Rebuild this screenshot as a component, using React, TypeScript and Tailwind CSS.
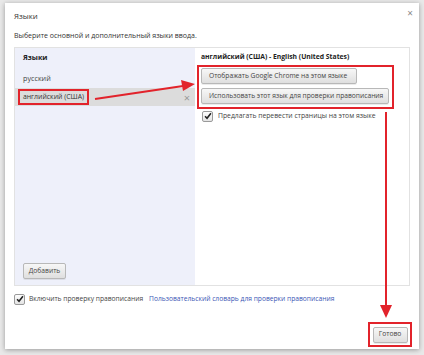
import React from "react";

function Check() {
  return (
    <span className="inline-flex h-[11px] w-[11px] shrink-0 items-center justify-center rounded-[2px] border border-[#9a9a9a] bg-gradient-to-b from-[#fdfdfd] to-[#e4e4e4]">
      <svg width="8" height="8" viewBox="0 0 9 9">
        <path d="M1.2 4.8 L3.4 7 L7.8 1.5" fill="none" stroke="#222" strokeWidth="1.8" />
      </svg>
    </span>
  );
}

function Btn({ children, className = "" }: { children: React.ReactNode; className?: string }) {
  return (
    <div
      className={
        "flex h-[16px] items-center whitespace-nowrap rounded-[2px] border border-[#b8b8b8] bg-gradient-to-b from-[#f7f7f7] to-[#dfdfdf] px-[7px] text-[6.7px] text-[#444] shadow-[0_1px_0_rgba(0,0,0,0.08)] " +
        className
      }
    >
      {children}
    </div>
  );
}

export default function App() {
  return (
    <div
      className="relative h-[355px] w-[424px] overflow-hidden whitespace-nowrap bg-[#e9e9e9] pl-[5px] pt-[3px]"
      style={{ fontFamily: '"Open Sans", "Noto Sans", sans-serif' }}
    >
      <div className="relative flex h-[346px] w-[414px] flex-col bg-white pl-[9px] pr-[9px] shadow-[0_1px_5px_rgba(0,0,0,0.35)]">
        <div className="absolute right-[6px] top-[5px] text-[10px] leading-none text-[#888]">×</div>
        <div className="mt-[7px] text-[7.8px] leading-[12px] text-[#333]">Языки</div>
        <div className="mt-[8px] text-[7px] leading-[12px] text-[#333]">Выберите основной и дополнительный языки ввода.</div>
        <div className="mt-[5px] flex h-[239px] w-[396px] border border-[#e2e2e2]">
          <div className="flex w-[180px] flex-col bg-[#eef0fa]">
            <div className="ml-[8px] mt-[3px] text-[7.2px] font-bold leading-[12px] text-[#222]">Языки</div>
            <div className="ml-[8px] mt-[9px] text-[7.2px] leading-[12px] text-[#444]">русский</div>
            <div className="mt-[4px] flex h-[18px] items-center justify-between bg-[#dcdcdc] pl-[3px] pr-[5px]">
              <div className="flex h-[16px] w-[71px] items-center justify-center border-[2px] border-[#e2232b] text-[6.9px] leading-none text-[#333]">
                английский (США)
              </div>
              <span className="text-[11px] leading-none text-[#999]">×</span>
            </div>
            <div className="flex-1" />
            <Btn className="mb-[6px] ml-[8px] w-[43px] justify-center px-0">Добавить</Btn>
          </div>
          <div className="flex flex-1 flex-col bg-white pl-[2px]">
            <div className="ml-[4px] mt-[3px] text-[6.8px] font-bold leading-[12px] text-[#222]">
              английский (США) - English (United States)
            </div>
            <div className="mt-[2px] flex h-[44px] w-[197px] flex-col gap-[4px] border-[2px] border-[#e2232b] pl-[2px] pt-[1px]">
              <Btn className="w-[156px]">Отображать Google Chrome на этом языке</Btn>
              <Btn className="w-[188px]">Использовать этот язык для проверки правописания</Btn>
            </div>
            <div className="ml-[5px] mt-[1px] flex items-center gap-[5px] text-[6.8px] leading-[12px] text-[#444]">
              <Check />
              <span>Предлагать перевести страницы на этом языке</span>
            </div>
          </div>
        </div>
        <div className="mt-[7px] flex items-center gap-[4px] text-[6.7px] leading-[12px]">
          <Check />
          <span className="text-[#444]">Включить проверку правописания</span>
          <span className="ml-[2px] text-[#3a55b4]">Пользовательский словарь для проверки правописания</span>
        </div>
        <div className="flex-1" />
        <div className="mb-[2px] flex justify-end">
          <div className="mr-[-2px] flex h-[25px] w-[44px] items-center justify-center border-[2px] border-[#e2232b]">
            <Btn className="h-[16px] w-[35px] justify-center px-0">Готово</Btn>
          </div>
        </div>
      </div>
      <svg className="pointer-events-none absolute left-0 top-0" width="424" height="355">
        <line x1="95" y1="99" x2="183" y2="86" stroke="#e2232b" strokeWidth="2" />
        <polygon points="195,84 181,80 183,91" fill="#e2232b" />
        <line x1="386" y1="112" x2="386" y2="306" stroke="#e2232b" strokeWidth="2" />
        <polygon points="386,318 380,305 392,305" fill="#e2232b" />
      </svg>
    </div>
  );
}
